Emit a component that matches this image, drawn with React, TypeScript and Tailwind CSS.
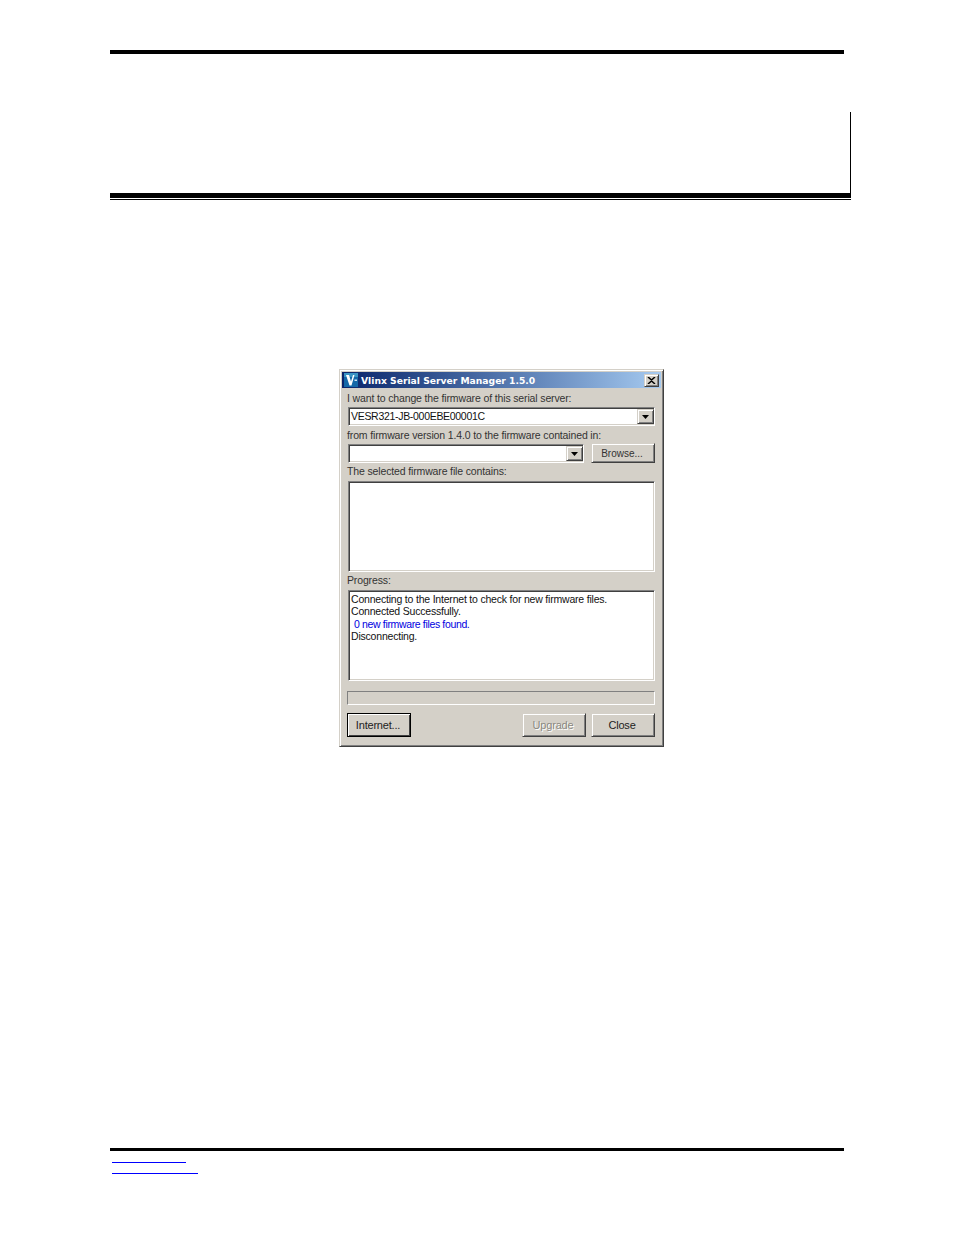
const font = "font-['Liberation_Sans',Arial,sans-serif]";
const sunken =
  "border border-[#808080] border-r-white border-b-white shadow-[inset_1px_1px_0_#404040,inset_-1px_-1px_0_#d4d0c8]";
const raised =
  "border border-[#d4d0c8] border-r-[#404040] border-b-[#404040] shadow-[inset_1px_1px_0_#fff,inset_-1px_-1px_0_#808080]";

function ArrowButton() {
  return (
    <div className={`w-[17px] h-[15px] bg-[#d4d0c8] flex items-center justify-center ${raised}`}>
      <svg width="7" height="4" viewBox="0 0 7 4">
        <path d="M0 0h7L3.5 4z" fill="#000" />
      </svg>
    </div>
  );
}

function Combo({ value, className }: { value?: string; className: string }) {
  return (
    <div className={`h-[19px] bg-white flex items-center justify-between pl-[2px] pr-0 ${sunken} ${className}`}>
      <span className="text-[10.5px] tracking-[-0.3px] leading-none text-[#111]">{value}</span>
      <ArrowButton />
    </div>
  );
}

function Label({ children, className }: { children: string; className: string }) {
  return (
    <div className={`flex items-center text-[10.5px] tracking-[-0.14px] leading-none text-[#333] ${className}`}>
      {children}
    </div>
  );
}

function WinButton({
  children,
  disabled,
  focused,
}: {
  children: string;
  disabled?: boolean;
  focused?: boolean;
}) {
  return (
    <button
      type="button"
      className={`w-16 h-6 pr-[2px] bg-[#d4d0c8] text-[11px] tracking-[-0.2px] leading-none ${
        focused ? "border border-black shadow-[inset_1px_1px_0_#fff,inset_-1px_-1px_0_#404040]" : raised
      } ${disabled ? "text-[#8a8880] [text-shadow:1px_1px_0_#fff]" : "text-[#222]"}`}
    >
      {children}
    </button>
  );
}

function Dialog() {
  return (
    <div className="w-[325px] h-[378px] bg-[#d4d0c8] border border-[#d4d0c8] border-r-[#404040] border-b-[#404040] p-[2px] shadow-[inset_1px_1px_0_#fff,inset_-1px_-1px_0_#808080]">
      <div className="h-4 flex items-center justify-between pl-[2px] pr-[2px] bg-gradient-to-r from-[#0a246a] to-[#a6caf0]">
        <div className="flex items-center gap-[3px]">
          <svg width="14" height="14" viewBox="0 0 14 14">
            <rect width="14" height="14" fill="#1468a8" />
            <rect width="14" height="4" fill="#3a94c4" />
            <path d="M2 2h3l2 6.5L9 2h1.5L7.5 12.5h-2z" fill="#fff" />
            <path d="M10.5 6.5H13V8h-2.5z" fill="#cfe6f5" />
          </svg>
          <span className="pt-px font-['DejaVu_Sans',sans-serif] text-[9.2px] font-bold leading-none text-white">
            Vlinx Serial Server Manager 1.5.0
          </span>
        </div>
        <div className={`w-[15px] h-[13px] bg-[#d4d0c8] flex items-center justify-center ${raised}`}>
          <svg width="9" height="7" viewBox="0 0 9 7">
            <path d="M1 0 4.5 3 8 0M1 7 4.5 4 8 7" stroke="#000" strokeWidth="1.5" fill="none" />
          </svg>
        </div>
      </div>
      <div className="pl-[5px] flex flex-col">
        <Label className="h-[19px] pt-px">I want to change the firmware of this serial server:</Label>
        <Combo value="VESR321-JB-000EBE00001C" className="ml-px w-[307px]" />
        <Label className="h-[18px]">from firmware version 1.4.0 to the firmware contained in:</Label>
        <div className="flex items-start ml-px">
          <Combo className="w-[236px]" />
          <button
            type="button"
            className={`ml-[7px] -mt-px w-16 h-5 pt-px pr-[2px] bg-[#d4d0c8] text-[10px] leading-none text-[#333] ${raised}`}
          >
            Browse...
          </button>
        </div>
        <Label className="h-[18px] pb-[2px]">The selected firmware file contains:</Label>
        <div className={`ml-px w-[307px] h-[91px] bg-white ${sunken}`} />
        <Label className="h-[18px] pb-[2px]">Progress:</Label>
        <div className={`ml-px w-[307px] h-[91px] bg-white px-[2px] pt-[2px] text-[10.5px] tracking-[-0.2px] leading-[12.3px] text-[#111] ${sunken}`}>
          <div>Connecting to the Internet to check for new firmware files.</div>
          <div>Connected Successfully.</div>
          <div className="text-[#0000e0] pl-[3px] tracking-[-0.35px]">0 new firmware files found.</div>
          <div>Disconnecting.</div>
        </div>
        <div className="mt-[10px] w-[308px] h-[14px] border border-[#808080] border-r-white border-b-white bg-[#d4d0c8]" />
        <div className="mt-2 w-[308px] flex items-start gap-[5px]">
          <WinButton focused>Internet...</WinButton>
          <div className="flex-1" />
          <WinButton disabled>Upgrade</WinButton>
          <WinButton>Close</WinButton>
        </div>
      </div>
    </div>
  );
}

export default function App() {
  return (
    <div className={`w-[954px] h-[1235px] bg-white flex flex-col pl-[110px] pt-[50px] overflow-hidden ${font}`}>
      <div className="w-[734px] h-1 bg-black" />
      <div className="mt-[58px] w-[741px] h-[81px] border-r-[1.5px] border-black" />
      <div className="w-[741px] h-[5px] bg-black" />
      <div className="mt-px w-[741px] h-px bg-black" />
      <div className="mt-[169px] ml-[229px]">
        <Dialog />
      </div>
      <div className="mt-[401px] w-[734px] h-[3px] bg-black" />
      <div className="mt-[11px] ml-[2px] w-[74px] h-px bg-[#0000ff]" />
      <div className="mt-[10px] ml-[2px] w-[86px] h-px bg-[#0000ff]" />
    </div>
  );
}
